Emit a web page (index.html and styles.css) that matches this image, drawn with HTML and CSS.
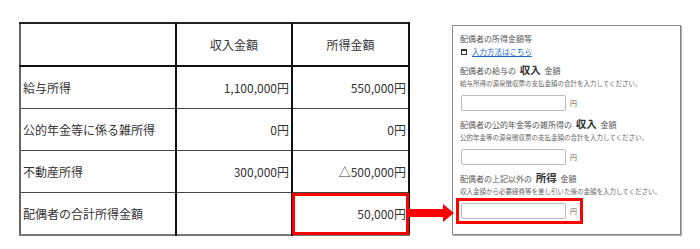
FILE: index.html
```html
<!DOCTYPE html>
<html lang="ja">
<head>
<meta charset="utf-8">
<link rel="stylesheet" href="styles.css">
</head>
<body>
<div class="page">
  <table class="tbl">
    <colgroup><col class="c1"><col class="c2"><col class="c3"></colgroup>
    <tr class="head"><td></td><td class="ctr">収入金額</td><td class="ctr">所得金額</td></tr>
    <tr><td>給与所得</td><td class="num">1,100,000円</td><td class="num">550,000円</td></tr>
    <tr><td>公的年金等に係る雑所得</td><td class="num">0円</td><td class="num">0円</td></tr>
    <tr><td>不動産所得</td><td class="num">300,000円</td><td class="num">△500,000円</td></tr>
    <tr class="last"><td>配偶者の合計所得金額</td><td></td><td class="num hl">50,000円</td></tr>
  </table>

  <svg class="arrow" width="48" height="20" viewBox="0 0 48 20">
    <rect x="0" y="6" width="36" height="8" fill="#ff0000"/>
    <polygon points="35,1 46,10 35,19" fill="#ff0000"/>
  </svg>

  <div class="panel">
    <div class="title">配偶者の所得金額等</div>
    <div class="link"><span class="ico"></span><a href="#">入力方法はこちら</a></div>

    <div class="label">配偶者の給与の <b>収入</b> 金額</div>
    <div class="help">給与所得の源泉徴収票の支払金額の合計を入力してください。</div>
    <div class="row"><span class="inp"></span><span class="yen">円</span></div>

    <div class="label">配偶者の公的年金等の雑所得の <b>収入</b> 金額</div>
    <div class="help">公的年金等の源泉徴収票の支払金額の合計を入力してください。</div>
    <div class="row"><span class="inp"></span><span class="yen">円</span></div>

    <div class="label">配偶者の上記以外の <b>所得</b> 金額</div>
    <div class="help">収入金額から必要経費等を差し引いた後の金額を入力してください。</div>
    <div class="row red"><span class="inp"></span><span class="yen">円</span></div>
  </div>
</div>
</body>
</html>
```

FILE: styles.css
```css
html, body {
  margin: 0;
  padding: 0;
  background: #ffffff;
}
body {
  font-family: "Noto Sans CJK JP", "Noto Sans", sans-serif;
  color: #333;
}
.page {
  position: relative;
  display: flex;
  align-items: flex-start;
  padding: 22px 0 0 19px;
}
.tbl {
  border-collapse: collapse;
  table-layout: fixed;
  width: 390px;
  font-size: 12px;
  border-top: 2px solid #222;
  border-left: 2px solid #666;
  border-right: 2px solid #111;
  border-bottom: 2px solid #777;
}
.c1 { width: 156px; }
.c2 { width: 116px; }
.c3 { width: 117px; }
.tbl td {
  height: 41px;
  padding: 0 2px;
  border-top: 1px solid #444;
  border-left: 2px solid #111;
  vertical-align: middle;
  white-space: nowrap;
  line-height: 14px;
}
.tbl td:first-child { border-left: none; }
.tbl tr.head td { height: 41px; border-bottom: 2px solid #111; }
.ctr { text-align: center; }
.num { text-align: right; }
.tbl td.hl {
  outline: 3px solid #ff0000;
  outline-offset: -3px;
}
.arrow {
  position: absolute;
  left: 408px;
  top: 203px;
}
.panel {
  margin: 3px 0 0 42px;
  width: 220px;
  height: 202px;
  padding: 6px 0 0 7px;
  border: 1px solid #888;
  box-shadow: 1px 1px 0 #aaa;
  color: #555;
}
.title {
  font-size: 8px;
  line-height: 13px;
}
.link {
  font-size: 7.5px;
  line-height: 13px;
  display: flex;
  align-items: center;
}
.ico {
  display: inline-block;
  width: 4px;
  height: 3px;
  border: 1px solid #333;
  border-top-width: 2px;
  margin: 0 5px 0 1px;
}
.link a { color: #1a6fd0; text-decoration: underline; }
.label {
  font-size: 8px;
  line-height: 14px;
  margin-top: 5px;
}
.label b {
  font-size: 10.5px;
  color: #333;
  margin: 0 2px;
}
.help {
  font-size: 6.5px;
  line-height: 11px;
  white-space: nowrap;
  color: #666;
}
.row {
  display: flex;
  align-items: center;
  width: 117px;
  margin-top: 6px;
  margin-left: 1px;
}
.inp {
  display: block;
  width: 103px;
  height: 14px;
  border: 1px solid #bbb;
  border-radius: 2px;
  background: #fff;
}
.yen {
  font-size: 7px;
  margin-left: 4px;
  color: #666;
}
.row.red {
  outline: 3px solid #ff0000;
  outline-offset: 2px;
}
.panel .row + .label { margin-top: 6px; }
```
